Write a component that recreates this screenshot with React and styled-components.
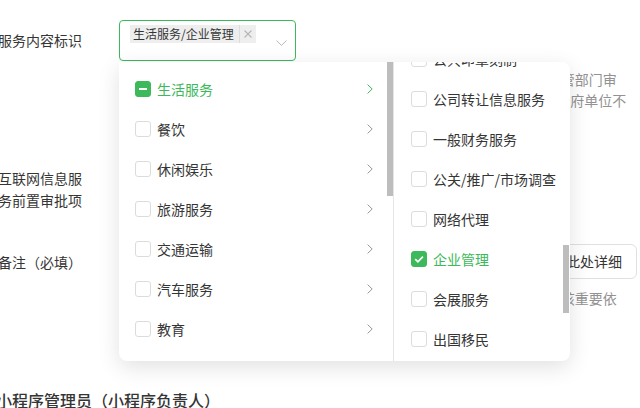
import React from 'react'
import styled, { createGlobalStyle } from 'styled-components'

const GREEN = '#3cb95b'

const GlobalStyle = createGlobalStyle`
  html, body {
    margin: 0;
    padding: 0;
    background: #fff;
  }
  body {
    width: 640px;
    height: 408px;
    overflow: hidden;
    font-family: "Noto Sans CJK SC", "Noto Sans", sans-serif;
    color: #353535;
  }
`

const Page = styled.div`
  padding-top: 20px;
  margin-left: -2px;
`

const Row = styled.div`
  display: grid;
  grid-template-columns: 121px 518px;
  margin-top: ${(p) => p.$gap || 0}px;
`

const Label = styled.div`
  font-size: 14px;
  line-height: 22px;
  padding-top: ${(p) => p.$pt || 0}px;
  padding-right: 30px;
`

const Field = styled.div`
  min-width: 0;
`

const Hint = styled.div`
  margin-top: ${(p) => p.$mt || 0}px;
  font-size: 14px;
  line-height: 21px;
  color: #929292;
  white-space: pre;
`

const SelectWrap = styled.div`
  position: relative;
  width: 177px;
`

const SelectBox = styled.div`
  box-sizing: border-box;
  height: 41px;
  border: 1px solid ${GREEN};
  border-radius: 4px;
  padding: 4px 8px 0 10px;
  display: flex;
  justify-content: space-between;
  background: #fff;
`

const Tag = styled.span`
  display: inline-flex;
  align-items: center;
  align-self: flex-start;
  height: 18px;
  padding-left: 3px;
  background: #eeeeee;
  font-size: 12px;
  line-height: 18px;
  color: #353535;
  white-space: nowrap;
`

const TagClose = styled.span`
  display: inline-flex;
  align-items: center;
  justify-content: center;
  width: 16px;
  height: 18px;
  margin-left: 5px;
  border-left: 1px solid #dcdcdc;
`

const Arrow = styled.svg`
  align-self: center;
  flex: none;
`

const Panel = styled.div`
  position: absolute;
  top: calc(100% + 1px);
  left: 0;
  z-index: 10;
  width: 451px;
  height: 299px;
  display: flex;
  overflow: hidden;
  background: #fff;
  border-radius: 0 8px 8px 8px;
  box-shadow: 0 6px 22px rgba(0, 0, 0, 0.12);
`

const Column = styled.div`
  position: relative;
  flex: none;
  box-sizing: border-box;
  width: ${(p) => p.$w}px;
  overflow: hidden;
  border-right: ${(p) => (p.$divider ? '1px solid #e5e5e5' : 'none')};
`

const List = styled.div`
  margin-top: ${(p) => p.$offset}px;
`

const Item = styled.div`
  height: 40px;
  display: flex;
  align-items: center;
  padding: 0 20px 0 ${(p) => p.$pl}px;
  font-size: 14px;
  color: ${(p) => (p.$active ? GREEN : '#353535')};
`

const Check = styled.span`
  flex: none;
  box-sizing: border-box;
  width: 16px;
  height: 16px;
  margin-right: 6px;
  border-radius: 3px;
  border: 1px solid ${(p) => (p.$on ? GREEN : '#dcdcdc')};
  background: ${(p) => (p.$on ? GREEN : '#fff')};
  display: inline-flex;
  align-items: center;
  justify-content: center;
`

const Dash = styled.span`
  width: 8px;
  height: 2px;
  background: #fff;
`

const ItemText = styled.span`
  flex: 1;
  white-space: nowrap;
`

const Thumb = styled.div`
  position: absolute;
  right: ${(p) => p.$right}px;
  top: ${(p) => p.$top}px;
  width: 6px;
  height: ${(p) => p.$h}px;
  background: #bdbdbd;
`

const Radios = styled.div`
  display: flex;
  gap: 24px;
  font-size: 14px;
  line-height: 22px;
`

const Radio = styled.label`
  display: inline-flex;
  align-items: center;
  gap: 6px;
  &::before {
    content: '';
    width: 14px;
    height: 14px;
    border-radius: 50%;
    border: 1px solid #d0d0d0;
  }
`

const Input = styled.div`
  box-sizing: border-box;
  height: 35px;
  border: 1px solid #e0e0e0;
  border-radius: 6px;
  padding: 0 14px 0 12px;
  font-size: 14px;
  line-height: 33px;
  color: #353535;
`

const InputText = styled.span`
  display: block;
  white-space: nowrap;
  overflow: hidden;
`

const Heading = styled.h2`
  margin: 58px 0 0 -2px;
  font-size: 16px;
  line-height: 24px;
  font-weight: 500;
  color: #353535;
`

const ChevronRight = ({ color }) => (
  <svg width="6" height="10" viewBox="0 0 6 10" fill="none">
    <path d="M0.6 0.6L5.2 5L0.6 9.4" stroke={color} strokeWidth="1" />
  </svg>
)

const categories = [
  { name: '生活服务', state: 'partial' },
  { name: '餐饮' },
  { name: '休闲娱乐' },
  { name: '旅游服务' },
  { name: '交通运输' },
  { name: '汽车服务' },
  { name: '教育' },
  { name: '医疗' },
]

const subCategories = [
  { name: '公共印章刻制' },
  { name: '公司转让信息服务' },
  { name: '一般财务服务' },
  { name: '公关/推广/市场调查' },
  { name: '网络代理' },
  { name: '企业管理', state: 'checked' },
  { name: '会展服务' },
  { name: '出国移民' },
  { name: '婚庆服务' },
]

const serviceHint = `请选择与小程序服务内容一致的标识，涉及前置审批的服务须提供1份主管部门审
批文件或相关资质证明；所提交的材料须真实、有效、完整， 如主体为政府单位不
需提供营业执照。`

const remarkHint = `请在备注说明小程序服务内容、服务对象及资质情况，备注将作为1项审核重要依
据。`

function CascadePanel() {
  return (
    <Panel>
      <Column $w={275} $divider>
        <List $offset={7}>
          {categories.map((c) => (
            <Item key={c.name} $pl={16} $active={c.state === 'partial'}>
              <Check $on={c.state === 'partial'}>{c.state === 'partial' && <Dash />}</Check>
              <ItemText>{c.name}</ItemText>
              <ChevronRight color={c.state === 'partial' ? GREEN : '#999999'} />
            </Item>
          ))}
        </List>
        <Thumb $right={0} $top={0} $h={134} />
      </Column>
      <Column $w={176}>
        <List $offset={-23}>
          {subCategories.map((c) => (
            <Item key={c.name} $pl={17} $active={c.state === 'checked'}>
              <Check $on={c.state === 'checked'}>
                {c.state === 'checked' && (
                  <svg width="12" height="12" viewBox="0 0 12 12" fill="none">
                    <path d="M2.2 6.2L4.9 8.8L9.9 3.6" stroke="#fff" strokeWidth="1.7" />
                  </svg>
                )}
              </Check>
              <ItemText>{c.name}</ItemText>
            </Item>
          ))}
        </List>
        <Thumb $right={1} $top={183} $h={68} />
      </Column>
    </Panel>
  )
}

export default function App() {
  return (
    <>
      <GlobalStyle />
      <Page>
        <Row>
          <Label $pt={9}>服务内容标识</Label>
          <Field>
            <SelectWrap>
              <SelectBox>
                <Tag>
                  生活服务/企业管理
                  <TagClose>
                    <svg width="8" height="8" viewBox="0 0 8 8">
                      <path d="M0.5 0.5L7.5 7.5M7.5 0.5L0.5 7.5" stroke="#b5b5b5" strokeWidth="1.1" />
                    </svg>
                  </TagClose>
                </Tag>
                <Arrow width="11" height="6" viewBox="0 0 11 6" fill="none">
                  <path d="M0.5 0.5L5.5 5.4L10.5 0.5" stroke="#b8b8b8" strokeWidth="1" />
                </Arrow>
              </SelectBox>
              <CascadePanel />
            </SelectWrap>
            <Hint $mt={8}>{serviceHint}</Hint>
          </Field>
        </Row>

        <Row $gap={35}>
          <Label>互联网信息服务前置审批项</Label>
          <Field>
            <Radios>
              <Radio>有</Radio>
              <Radio>无</Radio>
            </Radios>
          </Field>
        </Row>

        <Row $gap={33}>
          <Label $pt={7}>备注（必填）</Label>
          <Field>
            <Input>
              <InputText>小程序为中小企业提供企业管理咨询服务，服务范围及相关资质证明见此处详细说明。</InputText>
            </Input>
            <Hint $mt={9}>{remarkHint}</Hint>
          </Field>
        </Row>

        <Heading>小程序管理员（小程序负责人）</Heading>
      </Page>
    </>
  )
}
